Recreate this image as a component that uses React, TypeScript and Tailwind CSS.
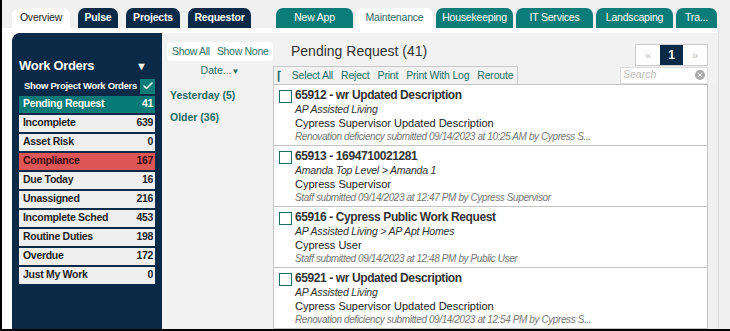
import { Check, X } from 'lucide-react';

const FONT = { fontFamily: "'Liberation Sans', Arial, sans-serif" };

const leftTabs = [
  { label: 'Overview', w: 'w-[58px]', active: true },
  { label: 'Pulse', w: 'w-[40px]' },
  { label: 'Projects', w: 'w-[54px]' },
  { label: 'Requestor', w: 'w-[63px]' },
];

const rightTabs = [
  { label: 'New App', w: 'w-[77px]' },
  { label: 'Maintenance', w: 'w-[77px]', active: true },
  { label: 'Housekeeping', w: 'w-[77px]' },
  { label: 'IT Services', w: 'w-[77px]' },
  { label: 'Landscaping', w: 'w-[77px]' },
  { label: 'Tra...', w: 'w-[41px]' },
];

const filters = [
  { label: 'Pending Request', count: 41, kind: 'active' },
  { label: 'Incomplete', count: 639 },
  { label: 'Asset Risk', count: 0 },
  { label: 'Compliance', count: 167, kind: 'alert' },
  { label: 'Due Today', count: 16 },
  { label: 'Unassigned', count: 216 },
  { label: 'Incomplete Sched', count: 453 },
  { label: 'Routine Duties', count: 198 },
  { label: 'Overdue', count: 172 },
  { label: 'Just My Work', count: 0 },
];

const requests = [
  {
    title: '65912 - wr Updated Description',
    location: 'AP Assisted Living',
    person: 'Cypress Supervisor Updated Description',
    meta: 'Renovation deficiency submitted 09/14/2023 at 10:25 AM by Cypress S...',
  },
  {
    title: '65913 - 1694710021281',
    location: 'Amanda Top Level > Amanda 1',
    person: 'Cypress Supervisor',
    meta: 'Staff submitted 09/14/2023 at 12:47 PM by Cypress Supervisor',
  },
  {
    title: '65916 - Cypress Public Work Request',
    location: 'AP Assisted Living > AP Apt Homes',
    person: 'Cypress User',
    meta: 'Staff submitted 09/14/2023 at 12:48 PM by Public User',
  },
  {
    title: '65921 - wr Updated Description',
    location: 'AP Assisted Living',
    person: 'Cypress Supervisor Updated Description',
    meta: 'Renovation deficiency submitted 09/14/2023 at 12:54 PM by Cypress S...',
  },
];

function FilterRow({ label, count, kind }: { label: string; count: number; kind?: string }) {
  const tone =
    kind === 'active'
      ? 'bg-[#087b78] text-white'
      : kind === 'alert'
        ? 'bg-[#e05555] text-[#3a1010]'
        : 'bg-[#efefef] text-[#1e1e1e]';
  return (
    <div
      className={`h-[17px] flex items-center justify-between pl-[4px] pr-[2px] text-[10.5px] font-bold tracking-[-0.3px] whitespace-nowrap ${tone}`}
    >
      <span>{label}</span>
      <span>{count}</span>
    </div>
  );
}

function RequestItem({ item }: { item: (typeof requests)[number] }) {
  return (
    <div className="h-[61px] border-b border-[#c4c4c4] flex gap-[3px] pl-[5px] pt-[3px]">
      <div className="w-[13px] h-[13px] border border-[#1a6e6a] bg-white mt-[2px] shrink-0" />
      <div className="flex flex-col leading-[14px] min-w-0 whitespace-nowrap">
        <span className="text-[12px] font-bold text-[#333] tracking-[-0.4px]">{item.title}</span>
        <span className="text-[10.5px] italic text-[#333] tracking-[-0.2px]">{item.location}</span>
        <span className="text-[11px] text-[#222]">{item.person}</span>
        <span className="text-[10px] italic text-[#777] tracking-[-0.4px]">{item.meta}</span>
      </div>
    </div>
  );
}

export default function App() {
  return (
    <div className="w-[730px] h-[331px] bg-black pl-[2px] pb-[2px] overflow-hidden" style={FONT}>
      <div className="h-full bg-[#f0f0f0] flex flex-col">
        {/* top tabs */}
        <div className="h-[28px] flex items-end pl-[10px] shrink-0">
          <div className="flex gap-[8px]">
            {leftTabs.map((t) => (
              <div
                key={t.label}
                className={`${t.w} h-[20px] rounded-t-[7px] flex items-center justify-center text-[10.5px] tracking-[-0.2px] ${
                  t.active ? 'bg-white text-[#222]' : 'bg-[#0a2a47] text-white font-bold'
                }`}
              >
                {t.label}
              </div>
            ))}
          </div>
          <div className="flex gap-[3px] ml-[25px]">
            {rightTabs.map((t) => (
              <div
                key={t.label}
                className={`${t.w} h-[20px] rounded-t-[7px] flex items-center justify-center text-[10.5px] tracking-[-0.2px] ${
                  t.active ? 'bg-white text-[#2c6663]' : 'bg-[#0b7c78] text-white'
                }`}
              >
                {t.label}
              </div>
            ))}
          </div>
        </div>

        {/* body */}
        <div className="flex-1 flex min-h-0">
          <div className="flex-1 flex bg-white pl-[10px] pt-[5px] min-w-0">
            {/* sidebar */}
            <div className="w-[150px] bg-[#0a2a47] rounded-tl-[8px] px-[7px] pt-[23px] shrink-0">
              <div className="flex items-center justify-between text-white pr-[8px]">
                <span className="text-[13px] font-bold tracking-[-0.3px]">Work Orders</span>
                <span className="text-[11px]">▼</span>
              </div>
              <div className="flex items-center justify-end gap-[3px] mt-[3px] text-white text-[9.5px] font-bold tracking-[-0.3px] whitespace-nowrap">
                <span>Show Project Work Orders</span>
                <span className="w-[15px] h-[15px] bg-[#0b7c78] flex items-center justify-center">
                  <Check size={12} strokeWidth={3} />
                </span>
              </div>
              <div className="flex flex-col gap-[2px] mt-[2px]">
                {filters.map((f) => (
                  <FilterRow key={f.label} {...f} />
                ))}
              </div>
            </div>

            {/* date filter column */}
            <div className="w-[111px] bg-[#f2f2f2] pt-[9px] pl-[5px] shrink-0 text-[#1e6b66]">
              <div className="bg-white rounded-[4px] h-[19px] flex items-center gap-[7px] px-[5px] text-[10.5px] tracking-[-0.3px] text-[#2a6f6a] whitespace-nowrap">
                <span>Show All</span>
                <span>Show None</span>
              </div>
              <div className="text-center text-[10.5px] leading-[13px] mt-[3px] text-[#2a6f6a]">
                Date...<span className="text-[8px]">▼</span>
              </div>
              <div className="text-[10.5px] leading-[13px] font-bold mt-[11px] pl-[3px]">Yesterday (5)</div>
              <div className="text-[10.5px] leading-[13px] font-bold mt-[9px] pl-[3px]">Older (36)</div>
            </div>

            {/* main panel */}
            <div className="flex-1 bg-[#f2f2f2] flex flex-col min-w-0">
              <div className="flex items-end justify-between h-[33px] pl-[18px] pr-[10px]">
                <span className="text-[14px] text-[#333] mb-[4px]">Pending Request (41)</span>
                <div className="flex h-[22px] border border-[#ccc] bg-white">
                  <span className="w-[24px] flex items-center justify-center text-[#bbb] text-[11px]">«</span>
                  <span className="w-[23px] flex items-center justify-center bg-[#0a2a47] text-white text-[12px] font-bold">1</span>
                  <span className="w-[24px] flex items-center justify-center text-[#bbb] text-[11px]">»</span>
                </div>
              </div>
              <div className="flex items-center justify-between pr-[10px] h-[18px]">
                <div className="h-[18px] border border-[#c8c8c8] border-b-0 flex items-center gap-[8px] pl-[3px] pr-[4px] text-[10.5px] tracking-[-0.2px] text-[#1d6e69] whitespace-nowrap">
                  <span className="text-[12px] font-bold leading-none mr-[2px]">⌈</span>
                  <span>Select All</span>
                  <span>Reject</span>
                  <span>Print</span>
                  <span>Print With Log</span>
                  <span>Reroute</span>
                </div>
                <div className="w-[88px] h-[17px] bg-white border border-[#ddd] flex items-center justify-between px-[2px]">
                  <span className="text-[10.5px] italic text-[#bbb]">Search</span>
                  <span className="w-[10px] h-[10px] rounded-full bg-[#aaa] flex items-center justify-center text-white">
                    <X size={8} strokeWidth={3} />
                  </span>
                </div>
              </div>
              <div className="flex-1 flex min-h-0">
                <div className="flex-1 bg-white border border-[#c4c4c4] border-b-0 overflow-hidden min-w-0">
                  {requests.map((r) => (
                    <RequestItem key={r.title} item={r} />
                  ))}
                </div>
                <div className="w-[10px] bg-[#f0f0f0]" />
              </div>
            </div>
          </div>
          <div className="w-[12px] bg-[#f0f0f0] border-l border-[#dcdcdc] shrink-0" />
        </div>
      </div>
    </div>
  );
}
